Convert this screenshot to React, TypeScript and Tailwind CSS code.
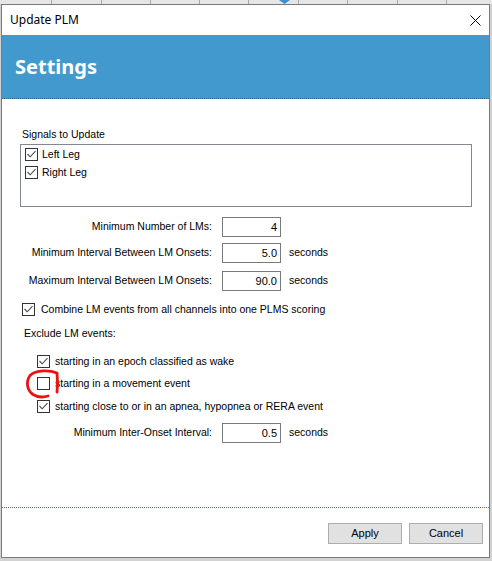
import React from "react";

function Box({ checked }: { checked: boolean }) {
  return (
    <span className="flex w-[13px] h-[13px] shrink-0 border border-[#333333] bg-white items-center justify-center">
      {checked && (
        <svg width="11" height="11" viewBox="0 0 11 11">
          <path d="M1.5 5 L4.2 7.8 L9.5 2.2" stroke="#4a4a4a" strokeWidth="1.1" fill="none" />
        </svg>
      )}
    </span>
  );
}

function Input({ value }: { value: string }) {
  return (
    <div className="w-[59px] h-[20px] border border-[#7a7a7a] bg-white flex items-center justify-end pr-[3px] text-[11px] leading-none">
      {value}
    </div>
  );
}

function Row({ label, value, unit, mt }: { label: string; value: string; unit?: boolean; mt: string }) {
  return (
    <div className={`flex items-center h-[20px] ${mt}`}>
      <div className="w-[192px] text-right">{label}</div>
      <div className="ml-[10px]">
        <Input value={value} />
      </div>
      {unit && <div className="ml-[8px]">seconds</div>}
    </div>
  );
}

export default function App() {
  return (
    <div className="relative w-[492px] h-[561px] bg-[#d2d2d2] overflow-hidden font-['Liberation_Sans',Arial,sans-serif] text-[10.5px] text-black">
      {/* background spreadsheet strip */}
      <div className="relative h-[4px] flex bg-[#e6e6e6]">
        <div className="w-[52px] h-full border-r border-[#a8a8a8]" />
        <div className="w-[50px] h-full border-r border-[#a8a8a8]" />
        <div className="w-[49px] h-full border-r border-[#a8a8a8]" />
        <div className="w-[49px] h-full border-r border-[#a8a8a8]" />
        <div className="w-[49px] h-full border-r border-[#a8a8a8]" />
        <div className="w-[50px] h-full border-r border-[#a8a8a8]" />
        <div className="w-[49px] h-full border-r border-[#a8a8a8]" />
        <div className="w-[50px] h-full border-r border-[#a8a8a8]" />
        <div className="w-[49px] h-full border-r border-[#a8a8a8]" />
        <div className="flex-1 h-full" />
        <svg className="absolute left-[279px] top-0" width="11" height="4" viewBox="0 0 11 4">
          <path d="M0 0 L11 0 L5.5 4 Z" fill="#3d8fd0" />
        </svg>
      </div>

      {/* window */}
      <div className="ml-[1px] w-[489px] h-[554px] border border-[#7a7a7a] bg-white flex flex-col">
        {/* title bar */}
        <div className="h-[30px] flex items-center justify-between pl-[8px] pr-[8px] font-['Noto_Sans',sans-serif] text-[12px]">
          <span>Update PLM</span>
          <svg width="11" height="11" viewBox="0 0 11 11">
            <path d="M0.5 0.5 L10.5 10.5 M10.5 0.5 L0.5 10.5" stroke="#000" strokeWidth="1" />
          </svg>
        </div>

        {/* header */}
        <div className="h-[64px] bg-[#4299cd] border-b border-dotted border-[#2c6f9e] flex items-center pl-[13px]">
          <span className="font-['Noto_Sans',sans-serif] font-bold text-[20px] text-white leading-none">Settings</span>
        </div>

        {/* content */}
        <div className="flex-1 pl-[18px] flex flex-col">
          <div className="mt-[29px] h-[13px] leading-[13px] ml-[2px]">Signals to Update</div>
          <div className="mt-[3px] w-[452px] h-[63px] border border-[#828790] pt-[3px] pl-[4px]">
            <div className="flex items-center h-[13px] gap-[4px]">
              <Box checked />
              <span>Left Leg</span>
            </div>
            <div className="flex items-center h-[13px] gap-[4px] mt-[5px]">
              <Box checked />
              <span>Right Leg</span>
            </div>
          </div>

          <Row label="Minimum Number of LMs:" value="4" mt="mt-[10px]" />
          <Row label="Minimum Interval Between LM Onsets:" value="5.0" unit mt="mt-[6px]" />
          <Row label="Maximum Interval Between LM Onsets:" value="90.0" unit mt="mt-[8px]" />

          <div className="mt-[12px] ml-[2px] flex items-center h-[13px] gap-[6px]">
            <Box checked />
            <span>Combine LM events from all channels into one PLMS scoring</span>
          </div>

          <div className="mt-[11px] ml-[4px] h-[13px] leading-[13px]">Exclude LM events:</div>

          <div className="mt-[15px] ml-[17px] flex items-center h-[13px] gap-[5px]">
            <Box checked />
            <span>starting in an epoch classified as wake</span>
          </div>
          <div className="mt-[9px] ml-[17px] flex items-center h-[13px] gap-[5px]">
            <Box checked={false} />
            <span>starting in a movement event</span>
          </div>
          <div className="mt-[10px] ml-[17px] flex items-center h-[13px] gap-[5px]">
            <Box checked />
            <span>starting close to or in an apnea, hypopnea or RERA event</span>
          </div>

          <Row label="Minimum Inter-Onset Interval:" value="0.5" unit mt="mt-[10px]" />
        </div>

        {/* footer */}
        <div className="h-[50px] border-t border-dotted border-[#3a78a8] flex justify-end items-start pt-[15px] pr-[6px] gap-[7px]">
          <button className="w-[74px] h-[21px] bg-[#e1e1e1] border border-[#adadad] text-[11px] leading-none">Apply</button>
          <button className="w-[74px] h-[21px] bg-[#e1e1e1] border border-[#adadad] text-[11px] leading-none">Cancel</button>
        </div>
      </div>

      {/* red annotation circle */}
      <svg className="absolute left-0 top-0 pointer-events-none" width="492" height="561" viewBox="0 0 492 561">
        <path
          d="M57 373 C50 370, 36 369.5, 30 375.5 C26 381, 26.5 390, 33 394.5 C37 397, 43 397.5, 48 396"
          stroke="#ee1111"
          strokeWidth="2.8"
          fill="none"
          strokeLinecap="round"
        />
        <path d="M57 373.5 C57.8 380, 57.8 386, 57 392" stroke="#ee1111" strokeWidth="2.8" fill="none" strokeLinecap="round" />
      </svg>
    </div>
  );
}
